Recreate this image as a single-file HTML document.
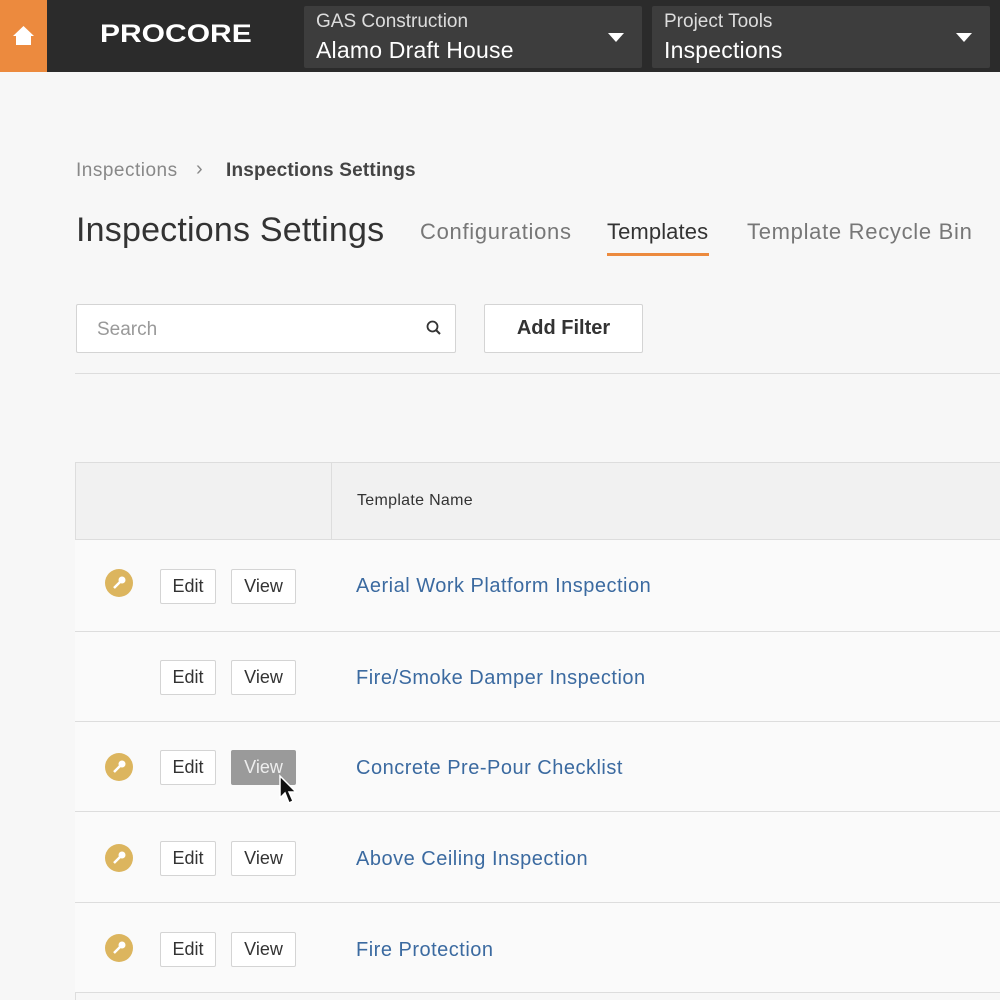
<!DOCTYPE html>
<html><head><style>
*{margin:0;padding:0;box-sizing:border-box}
body{width:1000px;height:1000px;overflow:hidden;background:#f7f7f7;font-family:"Liberation Sans",Arial,sans-serif;position:relative}
.a{position:absolute}
.hdr{left:0;top:0;width:1000px;height:72px;background:#2b2b2b}
.home{left:0;top:0;width:47px;height:72px;background:#ec8a3e}
.dd{top:6px;height:62px;background:#3d3d3d;color:#fff;border-radius:2px}
.dd .s{position:absolute;left:12px;top:5px;font-size:19px;color:#ddd}
.dd .b{position:absolute;left:12px;top:31px;font-size:23px;letter-spacing:0.2px}
.dd .t{position:absolute;right:18px;top:27px;width:0;height:0;border-left:8px solid transparent;border-right:8px solid transparent;border-top:9px solid #fff}
.btn{position:absolute;height:35px;border:1px solid #d4d4d4;background:#fff;border-radius:2px;font-size:18px;color:#333;text-align:center;line-height:33px}
.key{position:absolute;left:105px;width:28px;height:28px;border-radius:50%;background:#dcb55e}
.row{position:absolute;left:75px;width:925px;border-bottom:1px solid #ddd;background:#fafafa}
.lnk{position:absolute;left:356px;font-size:20px;color:#3b6aa0;letter-spacing:0.5px}
</style></head><body>
<div class="a hdr"></div>
<div class="a home"><svg width="47" height="72"><path d="M13 36 L23.5 26 L34 36 L31 36 L31 45 L16 45 L16 36 Z" fill="#fff"/></svg></div>
<div class="a" style="left:100px;top:20px;font-size:25px;font-weight:bold;color:#fff;transform:scaleX(1.2);transform-origin:left">PRO<span style="color:#fff">C</span>ORE</div>
<div class="a dd" style="left:304px;width:338px"><span class="s">GAS Construction</span><span class="b">Alamo Draft House</span><span class="t"></span></div>
<div class="a dd" style="left:652px;width:338px"><span class="s">Project Tools</span><span class="b">Inspections</span><span class="t"></span></div>

<div class="a" style="left:76px;top:160px;font-size:19px;color:#888;letter-spacing:0.5px">Inspections</div>
<div class="a" style="left:196px;top:158px;font-size:20px;color:#888">›</div>
<div class="a" style="left:226px;top:160px;font-size:19px;color:#444;font-weight:bold;letter-spacing:0.2px">Inspections Settings</div>
<div class="a" style="left:76px;top:211px;font-size:34px;color:#333;letter-spacing:0.2px">Inspections Settings</div>
<div class="a" style="left:420px;top:219px;font-size:22px;color:#777;letter-spacing:0.7px">Configurations</div>
<div class="a" style="left:607px;top:219px;font-size:22px;color:#333;letter-spacing:0.1px">Templates</div>
<div class="a" style="left:607px;top:253px;width:102px;height:3px;background:#ec8a3e"></div>
<div class="a" style="left:747px;top:219px;font-size:22px;color:#777;letter-spacing:0.7px">Template Recycle Bin</div>

<div class="a" style="left:76px;top:304px;width:380px;height:49px;border:1px solid #d4d4d4;background:#fff;border-radius:2px"></div>
<div class="a" style="left:97px;top:319px;font-size:19px;color:#999">Search</div>
<svg class="a" style="left:426px;top:320px" width="16" height="16"><circle cx="6.5" cy="6.5" r="5" stroke="#333" stroke-width="1.8" fill="none"/><path d="M10 10 L14 14" stroke="#333" stroke-width="2"/></svg>
<div class="btn" style="left:484px;top:304px;width:159px;height:49px;line-height:47px;font-size:20px;font-weight:bold;color:#333">Add Filter</div>
<div class="a" style="left:75px;top:373px;width:925px;height:1px;background:#ddd"></div>

<div class="a" style="left:75px;top:462px;width:925px;height:78px;background:#f1f1f1;border:1px solid #ddd;border-right:none"></div>
<div class="a" style="left:331px;top:463px;width:1px;height:77px;background:#ddd"></div>
<div class="a" style="left:357px;top:492px;font-size:16px;color:#333;letter-spacing:0.3px">Template Name</div>
<div class="a" style="left:75px;top:540px;width:1px;height:460px;background:#ddd"></div>

<div class="row" style="top:540px;height:92px"></div>
<div class="row" style="top:632px;height:90px"></div>
<div class="row" style="top:722px;height:90px"></div>
<div class="row" style="top:812px;height:91px"></div>
<div class="row" style="top:903px;height:90px"></div>

<div class="key" style="top:569px"></div>
<div class="key" style="top:753px"></div>
<div class="key" style="top:844px"></div>
<div class="key" style="top:934px"></div>
<svg class="a" style="left:105px;top:569px" width="28" height="28"><circle cx="17" cy="11" r="3.5" fill="#fff"/><path d="M15 13 L9 19" stroke="#fff" stroke-width="2.5"/></svg>
<svg class="a" style="left:105px;top:753px" width="28" height="28"><circle cx="17" cy="11" r="3.5" fill="#fff"/><path d="M15 13 L9 19" stroke="#fff" stroke-width="2.5"/></svg>
<svg class="a" style="left:105px;top:844px" width="28" height="28"><circle cx="17" cy="11" r="3.5" fill="#fff"/><path d="M15 13 L9 19" stroke="#fff" stroke-width="2.5"/></svg>
<svg class="a" style="left:105px;top:934px" width="28" height="28"><circle cx="17" cy="11" r="3.5" fill="#fff"/><path d="M15 13 L9 19" stroke="#fff" stroke-width="2.5"/></svg>

<div class="btn" style="left:160px;top:569px;width:56px">Edit</div><div class="btn" style="left:231px;top:569px;width:65px">View</div>
<div class="btn" style="left:160px;top:660px;width:56px">Edit</div><div class="btn" style="left:231px;top:660px;width:65px">View</div>
<div class="btn" style="left:160px;top:750px;width:56px">Edit</div><div class="btn" style="left:231px;top:750px;width:65px;background:#9a9a9a;border-color:#9a9a9a;color:#eee">View</div>
<div class="btn" style="left:160px;top:841px;width:56px">Edit</div><div class="btn" style="left:231px;top:841px;width:65px">View</div>
<div class="btn" style="left:160px;top:932px;width:56px">Edit</div><div class="btn" style="left:231px;top:932px;width:65px">View</div>
<svg class="a" style="left:278px;top:774px" width="24" height="36"><path d="M2 2 L2 24 L7 19 L11 29 L15 27 L11 18 L18 18 Z" fill="#111" stroke="#fff" stroke-width="1.5"/></svg>

<div class="lnk" style="top:575px">Aerial Work Platform Inspection</div>
<div class="lnk" style="top:667px">Fire/Smoke Damper Inspection</div>
<div class="lnk" style="top:757px">Concrete Pre-Pour Checklist</div>
<div class="lnk" style="top:848px">Above Ceiling Inspection</div>
<div class="lnk" style="top:939px">Fire Protection</div>
</body></html>
